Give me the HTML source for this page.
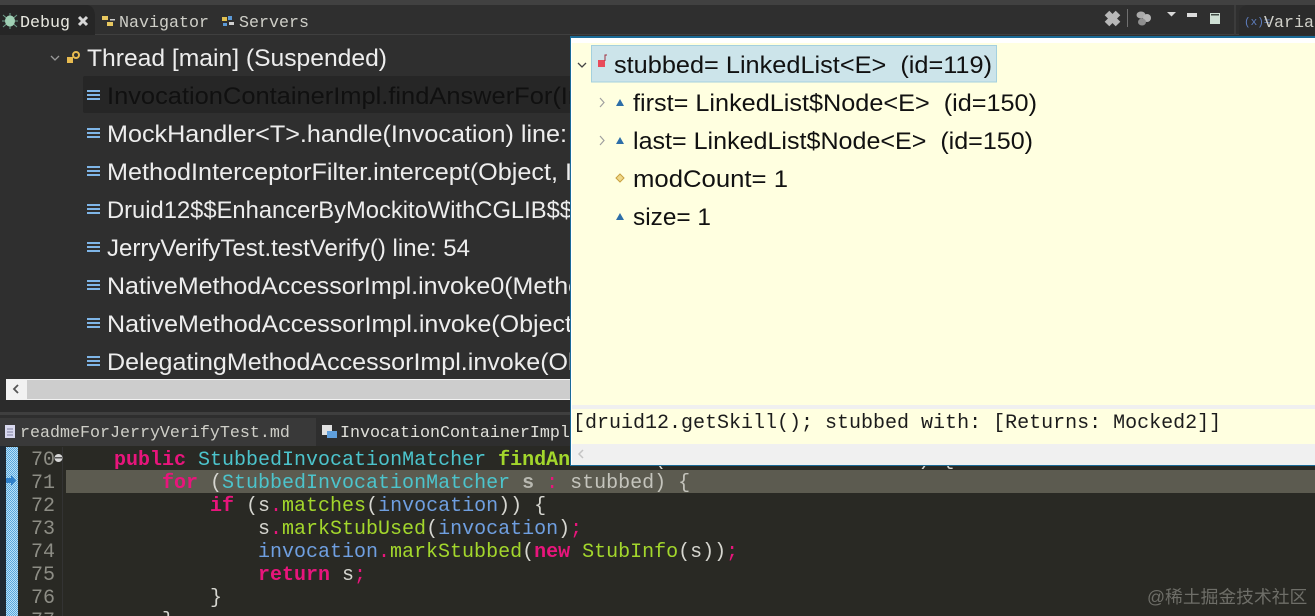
<!DOCTYPE html>
<html><head><meta charset="utf-8"><style>
html,body{margin:0;padding:0;background:#2f2f2f;width:1315px;height:616px;overflow:hidden}
svg{display:block}
.s{font-family:"Liberation Sans",sans-serif;font-size:24.5px;white-space:pre}
.m{font-family:"Liberation Mono",monospace;font-size:20px;white-space:pre}
.t{font-family:"Liberation Mono",monospace;font-size:16.67px;fill:#cfcfc8;white-space:pre}
.b{font-weight:bold}
.k{fill:#e8157c;font-weight:bold}.c{fill:#4cc4cc}.g{fill:#a3d72c}.v{fill:#6f9fe0}.w{fill:#d6d6d0}.p{fill:#e8157c}
.n{font-family:"Liberation Mono",monospace;font-size:20px;fill:#8d8d85}
</style></head><body>
<svg width="1315" height="616" viewBox="0 0 1315 616" xmlns="http://www.w3.org/2000/svg">
<defs><pattern id="d" width="2" height="2" patternUnits="userSpaceOnUse"><rect width="2" height="2" fill="#b8e0f8"/><rect width="1" height="1" fill="#5aa8dd"/><rect x="1" y="1" width="1" height="1" fill="#5aa8dd"/></pattern></defs>
<rect width="1315" height="616" fill="#2f2f2f"/>
<rect width="1315" height="5" fill="#414141"/>
<rect y="34" width="1315" height="1" fill="#3f3f3f"/>
<path d="M0 35V5H86q8 0 9 10V35Z" fill="#262626"/>
<!-- debug tab -->
<g><path d="M3 15l14 12M3 27l14-12M10 13v16M2 21h16" stroke="#6f9f8c" stroke-width="1"/><ellipse cx="10" cy="21" rx="5" ry="5.500" fill="#9fd0b4"/></g>
<text class="t" x="20" y="27" style="fill:#e8e8e0">Debug</text>
<path d="M79 17l8 8M87 17l-8 8" stroke="#d8d8d8" stroke-width="3"/>
<rect x="102" y="16" width="6" height="4" fill="#e8c860"/><rect x="107" y="22" width="6" height="4" fill="#e8c860"/><rect x="110" y="19" width="5" height="1.500" fill="#ccc"/>
<text class="t" x="119" y="27">Navigator</text>
<rect x="222" y="17" width="5" height="4" fill="#e0c050"/><rect x="228" y="16" width="4" height="4" fill="#5c9ad8"/><rect x="223" y="23" width="4" height="3" fill="#5c9ad8"/><rect x="229" y="22" width="5" height="3" fill="#cfcfcf"/>
<text class="t" x="239" y="27">Servers</text>
<!-- toolbar right -->
<path d="M1107 13l11 11M1118 13l-11 11" stroke="#b8b8b8" stroke-width="6.500"/>
<rect x="1127" y="9" width="1" height="18" fill="#707070"/>
<ellipse cx="1141" cy="15" rx="4.500" ry="3.500" fill="#aaa"/><ellipse cx="1147" cy="18" rx="4" ry="4" fill="#b5b5b5"/><ellipse cx="1142" cy="22" rx="4" ry="3.500" fill="#8f8f8f"/>
<path d="M1167 12h9l-4.500 4.500Z" fill="#d8d8d8"/>
<rect x="1187" y="13" width="10" height="4" fill="#dcdcdc"/>
<rect x="1210" y="13" width="10" height="11" fill="#cfe0d4"/><rect x="1211" y="14" width="8" height="1.500" fill="#3f4a44"/>
<path d="M1234 35V5h2V35Z" fill="#3c3c3c"/>
<path d="M1239 35V15q0-10 10-10H1315V35Z" fill="#2b2b2b"/>
<text x="1244" y="25" font-family="Liberation Mono,monospace" font-size="11" fill="#5f7fc0">(x)=</text>
<text class="t" x="1264" y="27">Varia</text>
<!-- stack -->
<path d="M51 56l4 4 4-4" fill="none" stroke="#9a9a9a" stroke-width="1.300"/>
<rect x="67" y="57" width="6" height="6" fill="#e8bb50"/><circle cx="76" cy="55" r="3" fill="none" stroke="#e8bb50" stroke-width="2"/>
<text class="s" x="87" y="66" fill="#ededed" textLength="300" lengthAdjust="spacingAndGlyphs">Thread [main] (Suspended)</text>
<rect x="83" y="76" width="488" height="37" rx="2" fill="#262626"/>
<g fill="#7fb6e8">
<rect x="87" y="90" width="13" height="2"/><rect x="87" y="94" width="13" height="2"/><rect x="87" y="98" width="13" height="2"/>
<rect x="87" y="128" width="13" height="2"/><rect x="87" y="132" width="13" height="2"/><rect x="87" y="136" width="13" height="2"/>
<rect x="87" y="166" width="13" height="2"/><rect x="87" y="170" width="13" height="2"/><rect x="87" y="174" width="13" height="2"/>
<rect x="87" y="204" width="13" height="2"/><rect x="87" y="208" width="13" height="2"/><rect x="87" y="212" width="13" height="2"/>
<rect x="87" y="242" width="13" height="2"/><rect x="87" y="246" width="13" height="2"/><rect x="87" y="250" width="13" height="2"/>
<rect x="87" y="280" width="13" height="2"/><rect x="87" y="284" width="13" height="2"/><rect x="87" y="288" width="13" height="2"/>
<rect x="87" y="318" width="13" height="2"/><rect x="87" y="322" width="13" height="2"/><rect x="87" y="326" width="13" height="2"/>
<rect x="87" y="356" width="13" height="2"/><rect x="87" y="360" width="13" height="2"/><rect x="87" y="364" width="13" height="2"/>
</g>
<g class="s" fill="#ededed">
<text x="107" y="104" fill="#101010" textLength="475" lengthAdjust="spacingAndGlyphs">InvocationContainerImpl.findAnswerFor(In</text>
<text x="107" y="142" textLength="460" lengthAdjust="spacingAndGlyphs">MockHandler&lt;T&gt;.handle(Invocation) line:</text>
<text x="107" y="180" textLength="465" lengthAdjust="spacingAndGlyphs">MethodInterceptorFilter.intercept(Object, I</text>
<text x="107" y="218" textLength="466" lengthAdjust="spacingAndGlyphs">Druid12$$EnhancerByMockitoWithCGLIB$$</text>
<text x="107" y="256" textLength="363" lengthAdjust="spacingAndGlyphs">JerryVerifyTest.testVerify() line: 54</text>
<text x="107" y="294" textLength="475" lengthAdjust="spacingAndGlyphs">NativeMethodAccessorImpl.invoke0(Metho</text>
<text x="107" y="332" textLength="465" lengthAdjust="spacingAndGlyphs">NativeMethodAccessorImpl.invoke(Object</text>
<text x="107" y="370" textLength="475" lengthAdjust="spacingAndGlyphs">DelegatingMethodAccessorImpl.invoke(Ob</text>
</g>
<!-- scrollbar -->
<rect x="6" y="379" width="565" height="21" fill="#f2f2f2"/>
<rect x="27" y="380" width="544" height="19" fill="#cdcdcd"/>
<path d="M18 385l-4 4 4 4" fill="none" stroke="#555" stroke-width="1.800"/>
<rect y="400" width="1315" height="12" fill="#2b2b2b"/>
<rect y="412" width="1315" height="3" fill="#3f3f3f"/>
<!-- editor tabs -->
<rect y="415" width="1315" height="31" fill="#2e2e2e"/>
<rect y="418" width="316" height="28" fill="#393939"/>
<rect x="5" y="425" width="10" height="13" fill="#d8d8ee"/><path d="M7 429h6M7 432h6M7 435h6" stroke="#8080a0"/>
<text class="t" x="20" y="437">readmeForJerryVerifyTest.md</text>
<rect x="322" y="425" width="10" height="10" fill="#e0e0e0"/><rect x="327" y="431" width="10" height="7" fill="#5f9fdc"/>
<text class="t" x="340" y="437" style="fill:#e0e0da">InvocationContainerImpl</text>
<!-- editor -->
<rect y="446" width="1315" height="170" style="fill:#292924"/>
<rect y="446" width="6" height="170" fill="#202830"/>
<rect x="6" y="447" width="12" height="169" fill="url(#d)"/>
<rect x="62" y="447" width="1" height="169" fill="#333"/>
<rect x="66" y="470" width="1249" height="23" fill="#5c5b50"/>
<path d="M6 478h5v-3l5 5.500-5 5.500v-3h-5Z" fill="#2f7fc8"/>
<g class="n">
<text x="31" y="465">70</text><text x="31" y="488">71</text><text x="31" y="511">72</text><text x="31" y="534">73</text><text x="31" y="557">74</text><text x="31" y="580">75</text><text x="31" y="603">76</text><text x="31" y="626">77</text>
</g>
<circle cx="58.500" cy="458" r="4" fill="#d8d8d8"/><rect x="55" y="457" width="7" height="1.500" fill="#555"/>
<text class="m" y="465" x="114"><tspan class="k">public</tspan><tspan class="w"> </tspan><tspan class="c">StubbedInvocationMatcher</tspan><tspan class="w"> </tspan><tspan class="g b">findAnswerFor</tspan><tspan class="w">(</tspan><tspan class="c">Invocation</tspan><tspan class="w"> </tspan><tspan class="v">invocation</tspan><tspan class="w">) {</tspan></text>
<text class="m" y="488" x="162"><tspan class="k">for</tspan><tspan class="w"> (</tspan><tspan class="c">StubbedInvocationMatcher</tspan><tspan class="w b" style="fill:#b8b8b0"> s </tspan><tspan class="p">:</tspan><tspan class="w" style="fill:#c4c4bc"> stubbed) {</tspan></text>
<text class="m" y="511" x="210"><tspan class="k">if</tspan><tspan class="w"> (s</tspan><tspan class="p">.</tspan><tspan class="g">matches</tspan><tspan class="w">(</tspan><tspan class="v">invocation</tspan><tspan class="w">)) {</tspan></text>
<text class="m" y="534" x="258"><tspan class="w">s</tspan><tspan class="p">.</tspan><tspan class="g">markStubUsed</tspan><tspan class="w">(</tspan><tspan class="v">invocation</tspan><tspan class="w">)</tspan><tspan class="p">;</tspan></text>
<text class="m" y="557" x="258"><tspan class="v">invocation</tspan><tspan class="p">.</tspan><tspan class="g">markStubbed</tspan><tspan class="w">(</tspan><tspan class="k">new</tspan><tspan class="w"> </tspan><tspan class="g">StubInfo</tspan><tspan class="w">(s))</tspan><tspan class="p">;</tspan></text>
<text class="m" y="580" x="258"><tspan class="k">return</tspan><tspan class="w"> s</tspan><tspan class="p">;</tspan></text>
<text class="m w" y="603" x="210">}</text>
<text class="m w" y="626" x="162">}</text>
<text x="1147" y="603" font-family="Liberation Sans,Noto Sans CJK SC,sans-serif" font-size="17.800" fill="#6e6e68">@稀土掘金技术社区</text>
<!-- popup -->
<rect x="570" y="36" width="745" height="430" fill="#1a6a96"/>
<rect x="571" y="38" width="744" height="427" fill="#ffffff"/>
<rect x="572" y="43" width="743" height="362" fill="#ffffe0"/>
<rect x="572" y="405" width="743" height="4" fill="#f0f0f0"/>
<rect x="572" y="409" width="743" height="35" fill="#ffffe0"/>
<rect x="572" y="444" width="743" height="21" fill="#f0f0f0"/>
<path d="M583 450l-4 4 4 4" fill="none" stroke="#c4c4c4" stroke-width="1.500"/>
<rect x="591.500" y="45.500" width="405" height="36.500" fill="#cce4ea" stroke="#a4d0de"/>
<path d="M578 63l4 4 4-4" fill="none" stroke="#444" stroke-width="1.300"/>
<rect x="598" y="60" width="7" height="7" fill="#e84a5a"/><path d="M607 55h-2v6" fill="none" stroke="#a03040"/>
<path d="M600 98l4 4.500-4 4.500M600 136l4 4.500-4 4.500" fill="none" stroke="#a0a0a0" stroke-width="1.200"/>
<path d="M616 106l4-7 4 7ZM616 144l4-7 4 7ZM616 220l4-7 4 7Z" fill="#2d6ea8"/>
<path d="M620 174l4 4-4 4-4-4Z" fill="#f0d888" stroke="#c8a040"/>
<g class="s" fill="#111">
<text x="614" y="73" textLength="378" lengthAdjust="spacingAndGlyphs">stubbed= LinkedList&lt;E&gt;&#160;&#160;(id=119)</text>
<text x="633" y="111" textLength="404" lengthAdjust="spacingAndGlyphs">first= LinkedList$Node&lt;E&gt;&#160;&#160;(id=150)</text>
<text x="633" y="149" textLength="400" lengthAdjust="spacingAndGlyphs">last= LinkedList$Node&lt;E&gt;&#160;&#160;(id=150)</text>
<text x="633" y="187" textLength="155" lengthAdjust="spacingAndGlyphs">modCount= 1</text>
<text x="633" y="225" textLength="78" lengthAdjust="spacingAndGlyphs">size= 1</text>
</g>
<text class="m" x="573" y="428" fill="#1c1c1c">[druid12.getSkill(); stubbed with: [Returns: Mocked2]]</text>
</svg>
</body></html>
